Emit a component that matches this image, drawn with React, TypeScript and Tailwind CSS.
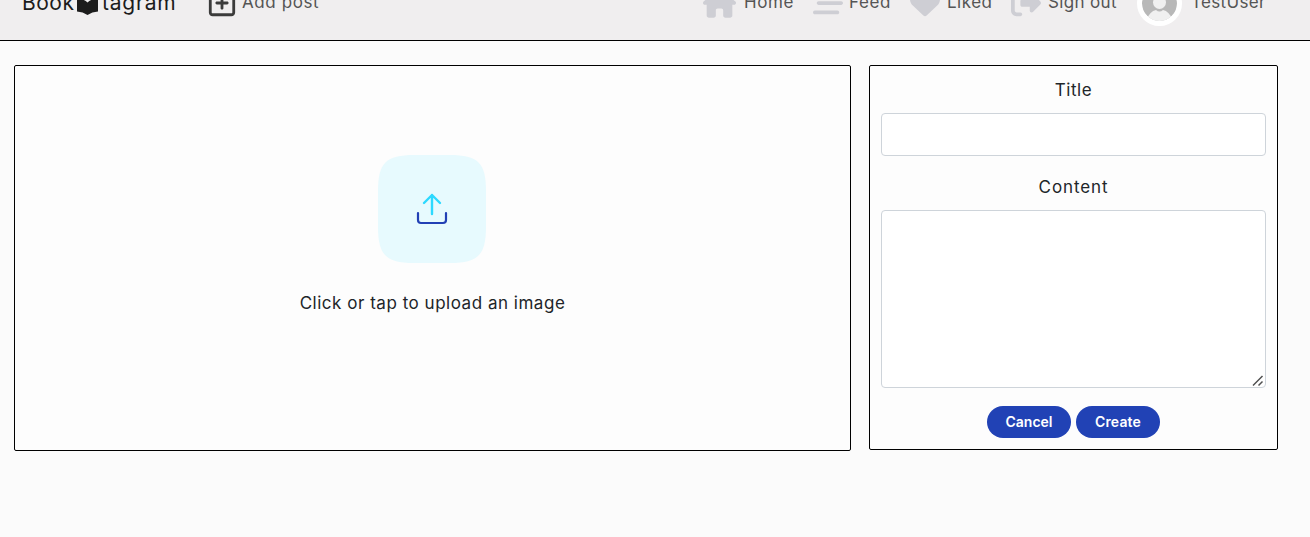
import { FaHouse, FaBarsStaggered, FaHeart, FaRightFromBracket, FaRegSquarePlus } from "react-icons/fa6";
import type { ReactNode } from "react";

function NavItem({ icon, label, className }: { icon: ReactNode; label: string; className: string }) {
  return (
    <a className={`flex shrink-0 items-center ${className}`}>
      <span className="shrink-0 text-[30px] text-[#ceced4]">{icon}</span>
      <span className="whitespace-nowrap">{label}</span>
    </a>
  );
}

function BookIcon() {
  return (
    <svg viewBox="0 0 21 21" className="mt-[3px] size-[21px] shrink-0" fill="currentColor">
      <path d="M0 4.2Q6 4.6 10.5 8.4Q15 4.6 21 4.2V17.6Q15 18 10.5 21Q6 18 0 17.6Z" />
    </svg>
  );
}

function Navbar() {
  return (
    <header className="h-[41px] overflow-hidden border-b border-black bg-[#f0eeef]">
      <nav className="-mt-[35px] flex h-[76px] items-center pl-[22px] text-[17px] tracking-[0.35px] text-[#555555]">
        <a className="flex w-[187px] shrink-0 items-center text-[21px] tracking-[0.8px] text-[#1c1c1c]">
          <span className="w-[55px] tracking-[0.5px]">Book</span>
          <BookIcon />
          <span className="ml-1">tagram</span>
        </a>
        <NavItem icon={<FaRegSquarePlus className="size-[30px] text-[#3b3b3b]" />} label="Add post" className="-ml-0.5 w-[496px] gap-[5px] tracking-[0.6px]" />
        <NavItem icon={<FaHouse className="h-[30px] w-[33px]" />} label="Home" className="w-[110px] gap-[8px] tracking-[0.6px]" />
        <NavItem icon={<FaBarsStaggered />} label="Feed" className="w-[97px] gap-[6px] tracking-[0.6px]" />
        <NavItem icon={<FaHeart />} label="Liked" className="w-[101px] gap-[7px] tracking-[0.5px]" />
        <NavItem icon={<FaRightFromBracket />} label="Sign out" className="w-[126px] gap-[7px]" />
        <span className="mr-[9px] size-[45px] shrink-0 rounded-full border-[5px] border-white bg-[#f0f0f0]">
          <svg viewBox="0 0 35 35" className="size-full rounded-full">
            <circle cx="17.5" cy="17.5" r="17.5" fill="#b8b8b8" />
            <circle cx="17.5" cy="16.5" r="6.5" fill="#f0f0f0" />
            <path d="M3.5 35Q8 25 14 24Q17.5 27 21 24Q27 25 31.5 35Z" fill="#f0f0f0" />
          </svg>
        </span>
        <span>TestUser</span>
      </nav>
    </header>
  );
}

function UploadIcon() {
  return (
    <svg viewBox="0 0 108 108" className="mr-px size-[108px]" fill="none" strokeLinecap="round" strokeLinejoin="round">
      <path d="M0 54V36C0 8 8 0 36 0H72C100 0 108 8 108 36V72C108 100 100 108 72 108H36C8 108 0 100 0 72Z" fill="#e7fafe" />
      <path d="M54 59V40M46 48l8-8 8 8" stroke="#2dd9ff" strokeWidth="2.4" />
      <path d="M40 58v7q0 3 3 3h22q3 0 3-3v-7" stroke="#2240b5" strokeWidth="2.2" />
    </svg>
  );
}

export default function App() {
  return (
    <div className="h-[537px] overflow-hidden bg-[#fbfbfb] font-['Inter',sans-serif] text-[#212529]">
      <Navbar />
      <main className="flex items-start gap-[18px] pt-6 pl-3.5">
        <section className="flex h-[386px] w-[837px] flex-col items-center rounded-[2px] border border-black bg-[#fdfdfd] pt-[89px]">
          <UploadIcon />
          <p className="mt-[26px] text-[17px] leading-7 tracking-[0.52px]">Click or tap to upload an image</p>
        </section>
        <form className="flex h-[385px] w-[409px] flex-col items-center rounded-[2px] border border-black bg-[#fdfdfd] px-[11px] text-[17px]">
          <label htmlFor="title" className="mt-[10px] leading-7 tracking-[0.6px]">Title</label>
          <input id="title" className="mt-[9px] h-[43px] w-full rounded border border-[#ced4da] bg-white" />
          <label htmlFor="content" className="mt-[17px] leading-7 tracking-[0.9px]">Content</label>
          <div className="relative mt-[9px] h-[178px] w-full shrink-0">
            <textarea id="content" className="block size-full resize-none rounded border border-[#ced4da] bg-white" />
            <svg viewBox="0 0 12 12" className="pointer-events-none absolute right-[2px] bottom-[1px] size-3" stroke="#505050" strokeWidth="1.5">
              <path d="M1 10.5L10.5 1M6.5 10.5L10.5 6.5" />
            </svg>
          </div>
          <div className="mt-[18px] flex gap-[5px] text-[14px] font-semibold text-white">
            <button type="button" className="h-8 w-[84px] rounded-full bg-[#2142b5] pb-0.5">Cancel</button>
            <button type="button" className="h-8 w-[84px] rounded-full bg-[#2142b5] pb-0.5 tracking-[0.15px]">Create</button>
          </div>
        </form>
      </main>
    </div>
  );
}
